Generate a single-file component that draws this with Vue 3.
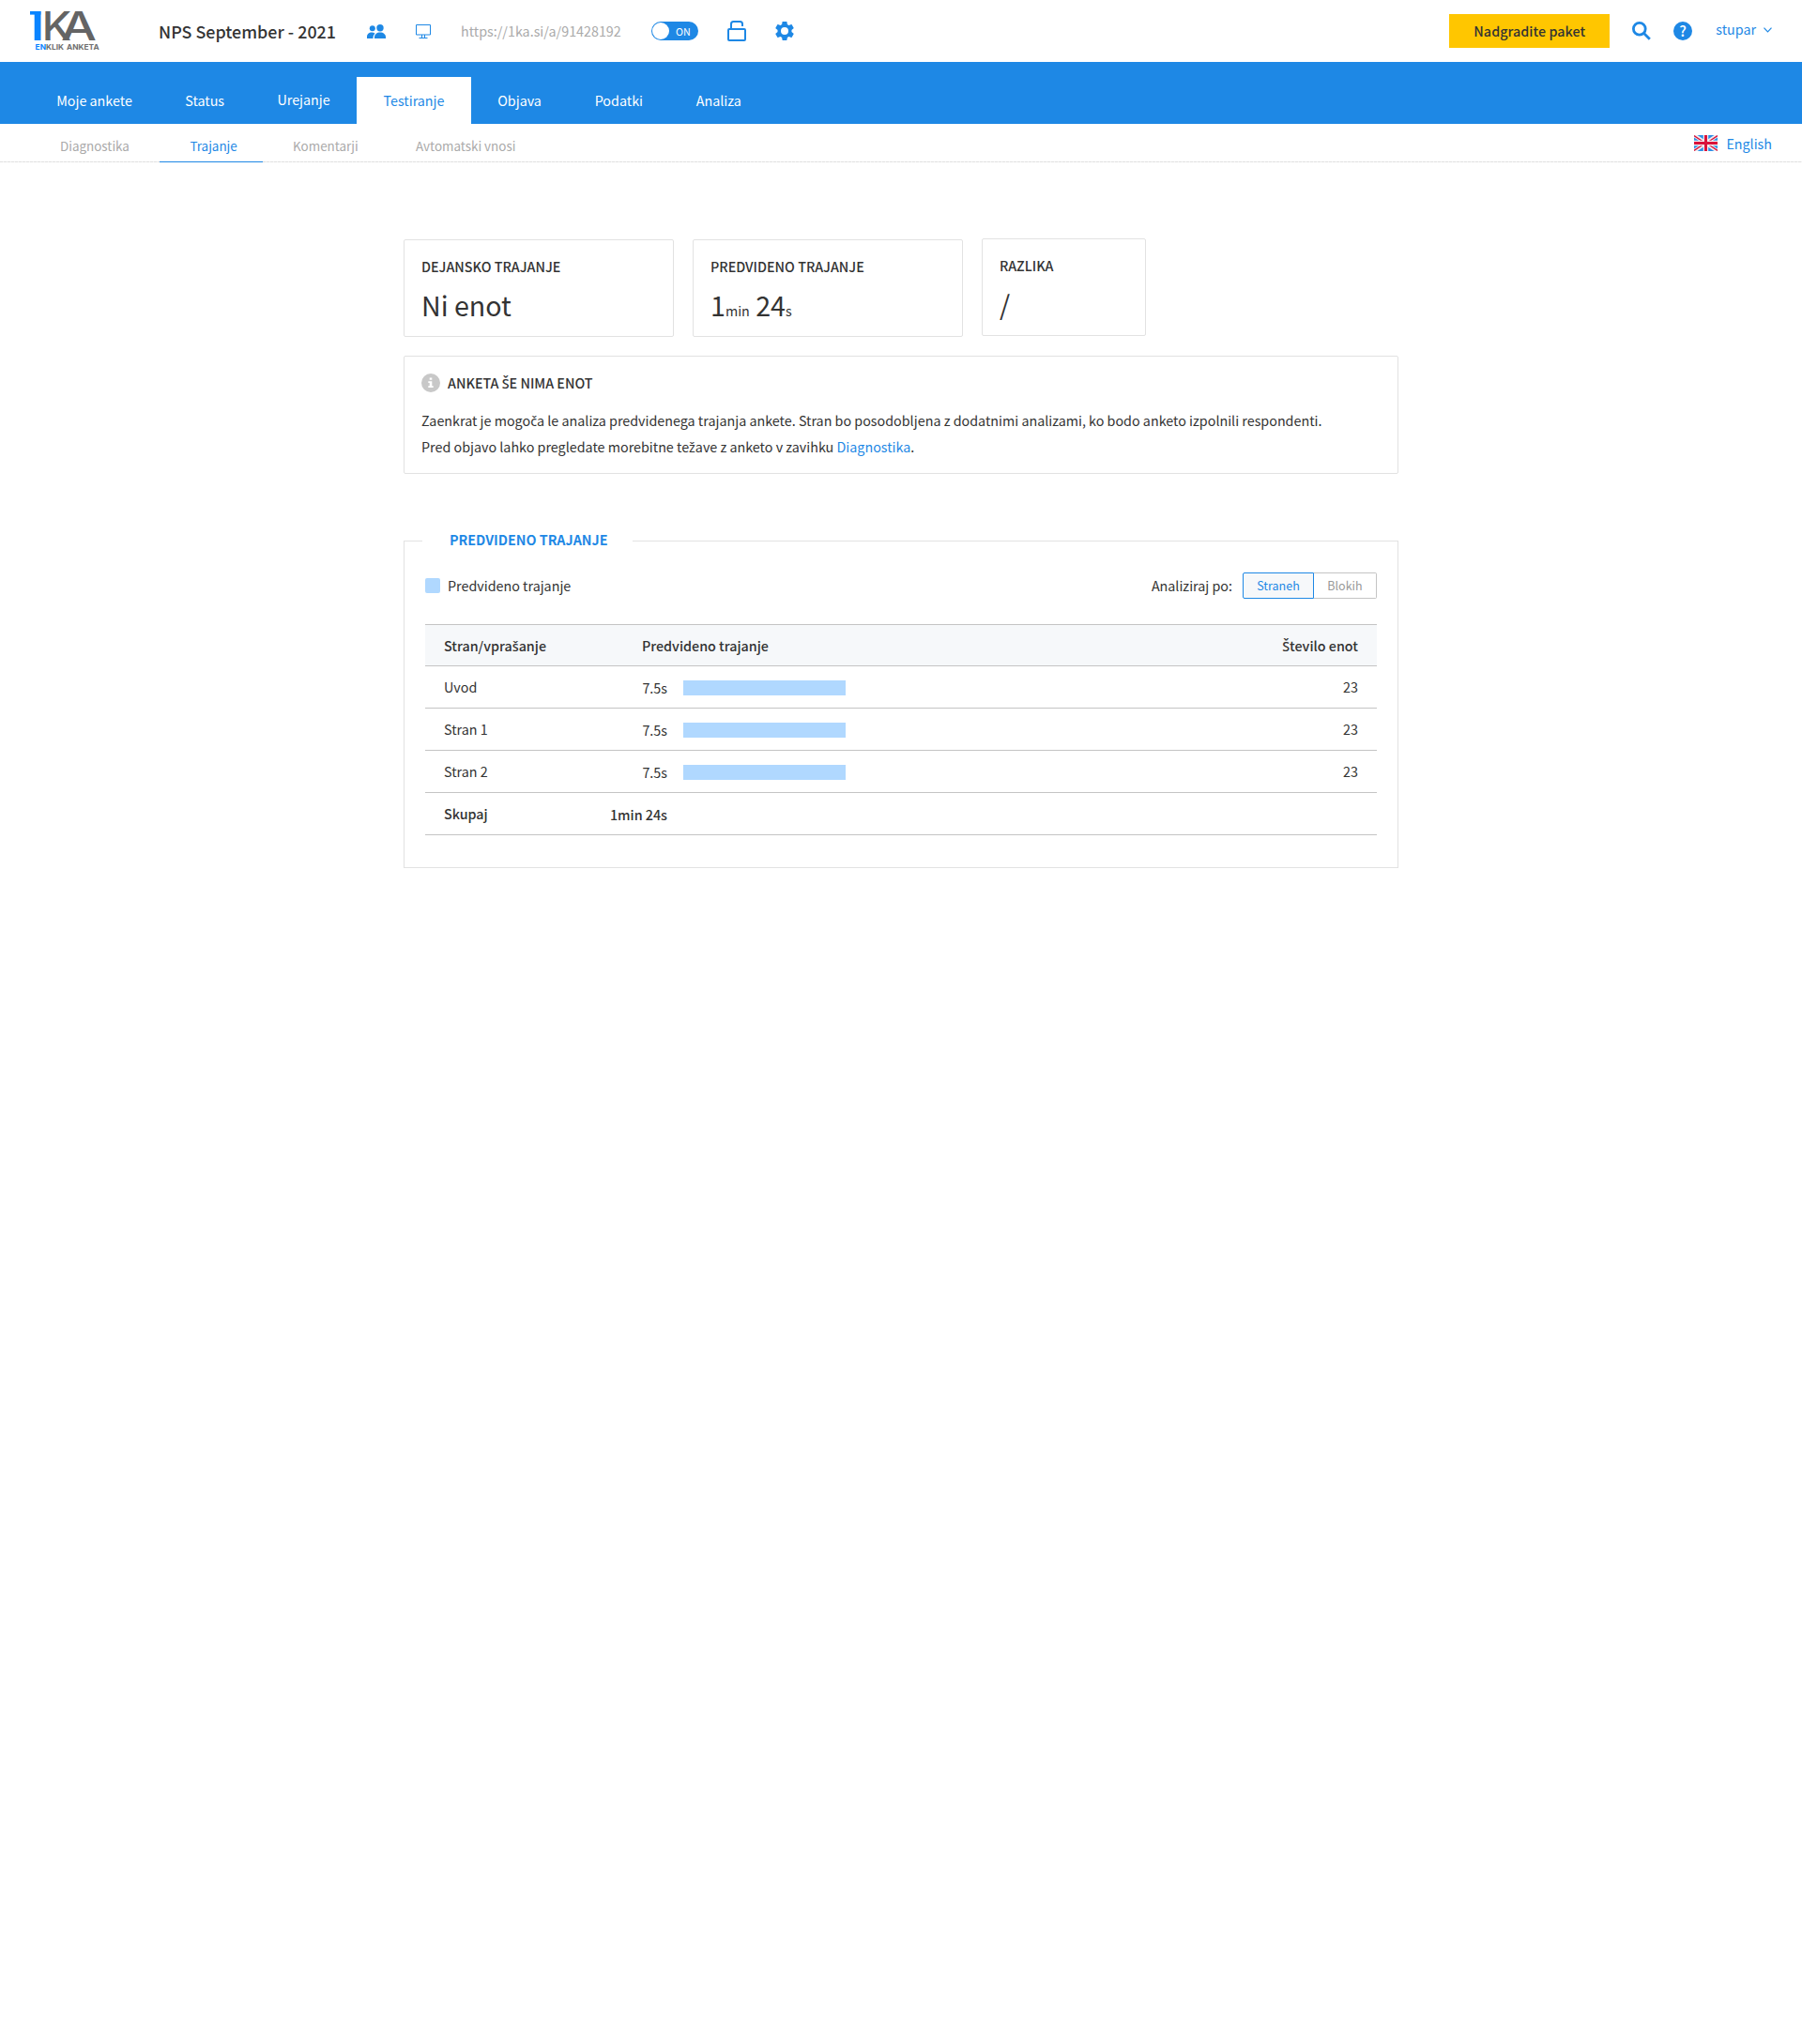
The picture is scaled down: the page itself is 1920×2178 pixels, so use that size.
<script setup>
import { ref } from 'vue'

const tabs = ['Moje ankete', 'Status', 'Urejanje', 'Testiranje', 'Objava', 'Podatki', 'Analiza']
const activeTab = ref('Testiranje')

const subTabs = ['Diagnostika', 'Trajanje', 'Komentarji', 'Avtomatski vnosi']
const activeSubTab = ref('Trajanje')

const groupings = ['Straneh', 'Blokih']
const grouping = ref('Straneh')

const rows = [
  { name: 'Uvod', time: '7.5s', width: 173, units: 23 },
  { name: 'Stran 1', time: '7.5s', width: 173, units: 23 },
  { name: 'Stran 2', time: '7.5s', width: 173, units: 23 },
]
</script>

<template>
  <div class="page">
    <header class="header">
      <svg class="logo" width="74" height="44" viewBox="0 0 74 44">
        <rect x="0" y="1" width="11.5" height="3.6" fill="#0a84ff" />
        <rect x="4.7" y="1" width="6.8" height="31" fill="#0a84ff" />
        <text class="logo-mark" x="12.8" y="32" textLength="31.5" lengthAdjust="spacingAndGlyphs">K</text>
        <text class="logo-mark" x="33" y="32" textLength="38" lengthAdjust="spacingAndGlyphs">A</text>
        <text class="logo-sub" x="5.6" y="42" textLength="68" lengthAdjust="spacingAndGlyphs"><tspan class="logo-en">EN</tspan>KLIK ANKETA</text>
      </svg>
      <h1 class="title">NPS September - 2021</h1>
      <svg class="icon" width="20" height="15" viewBox="0 0 20 15">
        <circle cx="5.8" cy="4.2" r="3" />
        <circle cx="14" cy="3.7" r="3.7" />
        <path d="M0 15v-1.6C0 10.4 2.2 8.6 5 8.6c1.5 0 2.7.4 3.6 1.1C7.2 10.8 6.5 12.3 6.5 15z" />
        <path d="M8 15v-1.2c0-3.2 2.5-5.2 6-5.2s6 2 6 5.2V15z" />
      </svg>
      <svg class="icon-line" width="16" height="15" viewBox="0 0 16 15">
        <path d="M.5.5h15v10.5H.5zM6.5 11v3.5M9.5 11v3.5M3.5 14.5h9" />
      </svg>
      <span class="url">https://1ka.si/a/91428192</span>
      <div class="toggle">
        <span class="knob"></span>
        <span class="toggle-label">ON</span>
      </div>
      <svg class="lock" width="20" height="22" viewBox="0 0 20 22">
        <rect x="1" y="9" width="18" height="12" rx="1" />
        <path d="M4 9V3.5Q4 1 6.5 1h7Q16 1 16 3.5V6" />
      </svg>
      <svg class="icon gear" width="20" height="20" viewBox="2 2 20 20">
        <path d="M19.43 12.98c.04-.32.07-.64.07-.98s-.03-.66-.07-.98l2.11-1.65c.19-.15.24-.42.12-.64l-2-3.46c-.12-.22-.39-.3-.61-.22l-2.49 1c-.52-.4-1.08-.73-1.69-.98l-.38-2.65C14.46 2.18 14.25 2 14 2h-4c-.25 0-.46.18-.49.42l-.38 2.65c-.61.25-1.17.59-1.69.98l-2.49-1c-.23-.09-.49 0-.61.22l-2 3.46c-.13.22-.07.49.12.64l2.11 1.65c-.04.32-.07.65-.07.98s.03.66.07.98l-2.11 1.65c-.19.15-.24.42-.12.64l2 3.46c.12.22.39.3.61.22l2.49-1c.52.4 1.08.73 1.69.98l.38 2.65c.03.24.24.42.49.42h4c.25 0 .46-.18.49-.42l.38-2.65c.61-.25 1.17-.59 1.69-.98l2.49 1c.23.09.49 0 .61-.22l2-3.46c.12-.22.07-.49-.12-.64l-2.11-1.65zM12 16a4 4 0 1 1 0-8 4 4 0 0 1 0 8z" />
      </svg>

      <div class="header-right">
        <button class="upgrade">Nadgradite paket</button>
        <svg class="search" width="20" height="20" viewBox="0 0 20 20">
          <circle cx="7.8" cy="7.8" r="6.4" />
          <path d="M12.3 12.3l6.5 6.5" />
        </svg>
        <svg class="icon" width="20" height="20" viewBox="0 0 20 20">
          <circle cx="10" cy="10" r="10" />
          <text class="help-mark" x="10" y="15.7" text-anchor="middle">?</text>
        </svg>
        <a class="user">
          <span>stupar</span>
          <svg class="caret" width="9" height="6" viewBox="0 0 9 6">
            <path d="M.5.7l4 4.2 4-4.2" />
          </svg>
        </a>
      </div>
    </header>

    <nav class="tabs">
      <a
        v-for="tab in tabs"
        :key="tab"
        class="tab"
        :class="{ active: tab === activeTab }"
        @click="activeTab = tab"
      >{{ tab }}</a>
    </nav>

    <nav class="subtabs">
      <a
        v-for="tab in subTabs"
        :key="tab"
        class="subtab"
        :class="{ active: tab === activeSubTab }"
        @click="activeSubTab = tab"
      >{{ tab }}</a>
      <a class="language">
        <svg width="25" height="17" viewBox="0 0 25 17">
          <rect width="25" height="17" fill="#2f8fe6" />
          <path d="M0 0l25 17M25 0L0 17" stroke="#f1eef0" stroke-width="4" />
          <path d="M0 .6l10 6.6M25 .6l-10 6.6M0 16.4l10-6.6M25 16.4l-10-6.6" stroke="#d9123a" stroke-width="1.3" />
          <path d="M12.5 0v17M0 8.5h25" stroke="#f1eef0" stroke-width="5.4" />
          <path d="M12.5 0v17M0 8.5h25" stroke="#d9123a" stroke-width="3" />
        </svg>
        <span>English</span>
      </a>
    </nav>

    <main class="content">
      <section class="cards">
        <div class="card">
          <h2>DEJANSKO TRAJANJE</h2>
          <p class="value">Ni enot</p>
        </div>
        <div class="card">
          <h2>PREDVIDENO TRAJANJE</h2>
          <p class="value">1<small>min</small> 24<small>s</small></p>
        </div>
        <div class="card card-small">
          <h2>RAZLIKA</h2>
          <p class="value">/</p>
        </div>
      </section>

      <section class="notice">
        <div class="notice-head">
          <svg width="20" height="20" viewBox="0 0 20 20">
            <circle cx="10" cy="10" r="10" fill="#c8c8c8" />
            <path d="M8.7 4.5h2.6v2.3H8.7zM7.3 8.3h4v5h1.4V15H7.3v-1.7h1.4V10H7.3z" fill="#fff" />
          </svg>
          <h2>ANKETA <span class="caron">Š</span>E NIMA ENOT</h2>
        </div>
        <p>
          Zaenkrat je mogo<span class="caron">č</span>a le analiza predvidenega trajanja ankete. Stran bo posodobljena z dodatnimi analizami, ko bodo anketo izpolnili respondenti.<br>
          Pred objavo lahko pregledate morebitne te<span class="caron">ž</span>ave z anketo v zavihku <a>Diagnostika</a>.
        </p>
      </section>

      <fieldset class="panel">
        <legend>PREDVIDENO TRAJANJE</legend>
        <div class="panel-bar">
          <span class="swatch"></span>
          <span class="bar-text">Predvideno trajanje</span>
          <span class="bar-text group-label">Analiziraj po:</span>
          <div class="segments">
            <button
              v-for="g in groupings"
              :key="g"
              class="segment"
              :class="{ active: g === grouping }"
              @click="grouping = g"
            >{{ g }}</button>
          </div>
        </div>

        <div class="table">
          <div class="row row-head">
            <span class="col-question">Stran/vpra<span class="caron">š</span>anje</span>
            <span>Predvideno trajanje</span>
            <span class="col-units"><span class="caron">Š</span>tevilo enot</span>
          </div>
          <div
            v-for="row in rows"
            :key="row.name"
            class="row"
          >
            <span class="col-name">{{ row.name }}</span>
            <span class="col-time">{{ row.time }}</span>
            <span class="bar" :style="{ width: row.width + 'px' }"></span>
            <span class="col-units">{{ row.units }}</span>
          </div>
          <div class="row row-total">
            <span class="col-name">Skupaj</span>
            <span class="col-time">1min 24s</span>
          </div>
        </div>
      </fieldset>
    </main>
  </div>
</template>

<style>
body {
  margin: 0;
  background: #fff;
}
</style>

<style scoped>
.page {
  min-height: 2178px;
  font-family: "Noto Sans CJK SC", "Noto Sans", sans-serif;
  font-size: 14.32px;
  color: #333;
}

.page * {
  box-sizing: border-box;
}

h1,
h2,
p {
  margin: 0;
}

svg {
  display: block;
  flex: none;
  overflow: visible;
}

.language svg {
  overflow: hidden;
}

button {
  font-family: inherit;
  cursor: pointer;
}

/* letters with a caron come from Noto Sans */
.caron {
  font-family: "Noto Sans", sans-serif;
  line-height: 0;
}

.header {
  display: flex;
  align-items: center;
  gap: 32px;
  height: 66px;
  padding: 0 32px;
}

.logo-mark {
  font-family: Inter, sans-serif;
  font-size: 42.6px;
  font-weight: 500;
  fill: #646464;
}

.logo-sub {
  font-family: Inter, sans-serif;
  font-size: 7.8px;
  font-weight: 700;
  word-spacing: 1px;
  fill: #707070;
}

.logo-en {
  fill: #0a84ff;
}

.title {
  width: 190px;
  margin-left: 31px;
  font-size: 17.9px;
  font-weight: 500;
  white-space: nowrap;
}

.icon {
  fill: #1e88e5;
}

.icon-line {
  fill: none;
  stroke: #1e88e5;
}

.url {
  width: 171px;
  margin-top: -2px;
  color: #aaa;
  white-space: nowrap;
}

.toggle {
  display: flex;
  align-items: center;
  width: 50px;
  height: 20px;
  padding: 1px;
  border-radius: 10px;
  background: #1e88e5;
}

.knob {
  width: 18px;
  height: 18px;
  border-radius: 50%;
  background: #fff;
}

.toggle-label {
  margin: 0 0 0 7px;
  font-size: 10.74px;
  color: #fff;
}

.lock {
  margin-left: -1px;
  fill: none;
  stroke: #1e88e5;
  stroke-width: 2;
}

.gear {
  margin-left: -1px;
}

.header-right {
  display: flex;
  align-items: center;
  gap: 24px;
  margin-left: auto;
}

.upgrade {
  width: 171px;
  height: 36px;
  padding: 0 0 2px;
  border: 0;
  background: #ffc600;
  color: #333;
  font-size: 14.32px;
  font-weight: 500;
  letter-spacing: 0.05px;
}

.search {
  fill: none;
  stroke: #1e88e5;
  stroke-width: 2.8;
}

.help-mark {
  font-size: 15.5px;
  font-weight: 500;
  fill: #fff;
}

.user {
  display: flex;
  align-items: center;
  gap: 8px;
  margin: -5px 0 0 1px;
  color: #1e88e5;
}

.caret {
  margin-top: 3px;
  fill: none;
  stroke: #1e88e5;
  stroke-width: 1.2;
}

.tabs {
  display: flex;
  align-items: flex-end;
  height: 66px;
  padding-left: 31px;
  background: #1e88e5;
}

.tab {
  height: 50px;
  padding: 0 28.4px;
  line-height: 50px;
  color: #fff;
  cursor: pointer;
}

.tab:nth-child(1) {
  padding: 0 27.6px 0 29.2px;
}

.tab:nth-child(2) {
  padding: 0 28px 0 28.8px;
}

.tab:nth-child(3) {
  line-height: 48px;
}

.tab.active {
  background: #fff;
  color: #1e88e5;
}

.subtabs {
  display: flex;
  height: 41px;
  padding: 0 32px 0 64px;
  background: repeating-linear-gradient(90deg, #e0e0e0 0 3px, #f2f2f2 3px 4px) 0 100% / 100% 1px no-repeat;
}

.subtab {
  height: 41px;
  padding: 0 32px;
  font-size: 13.43px;
  line-height: 47px;
  color: #aaa;
  cursor: pointer;
}

.subtab:nth-child(1) {
  width: 106px;
  padding: 0;
}

.subtab:nth-child(2) {
  width: 110px;
  padding: 0 0 0 32.4px;
}

.subtab:nth-child(3) {
  width: 131px;
  padding: 0 0 0 32px;
}

.subtab.active {
  border-bottom: 1px solid #1e88e5;
  color: #1e88e5;
}

.language {
  display: flex;
  align-items: center;
  gap: 9px;
  height: 40px;
  margin-left: auto;
  color: #1e88e5;
}

.content {
  width: 1060px;
  margin: 82px auto 0;
}

.cards {
  display: flex;
  gap: 20px;
}

.card {
  width: 288px;
  height: 104px;
  padding: 17px 18px;
  border: 1px solid #e2e2e2;
  border-radius: 2px;
}

.card-small {
  width: 175px;
  margin-top: -1px;
}

h2 {
  font-size: 14.32px;
  font-weight: 500;
  line-height: 21px;
}

.value {
  margin-top: 11px;
  font-size: 28.64px;
  line-height: 40px;
}

.value small {
  font-size: 14.32px;
}

.notice {
  height: 126px;
  margin-top: 20px;
  padding: 18px;
  border: 1px solid #e2e2e2;
  border-radius: 2px;
}

.notice-head {
  display: flex;
  align-items: center;
  gap: 8px;
  height: 20px;
}

.notice-head h2 {
  padding-bottom: 2px;
}

.notice p {
  margin-top: 16px;
  line-height: 28px;
  white-space: nowrap;
}

.notice a {
  color: #1e88e5;
}

.panel {
  min-width: 0;
  height: 359px;
  margin: 61px 0 0;
  padding: 0 22px;
  border: 1px solid #e2e2e2;
}

.panel legend {
  height: 20px;
  margin-left: -3px;
  padding: 0 27px 0 29px;
  font-weight: 700;
  line-height: 18px;
  color: #1e88e5;
}

.panel-bar {
  display: flex;
  align-items: center;
  height: 28px;
  margin-top: 24px;
}

.swatch {
  width: 16px;
  height: 16px;
  margin-right: 8px;
  border-radius: 2px;
  background: #b0d8ff;
}

.bar-text {
  padding-bottom: 1px;
}

.group-label {
  margin-left: auto;
  margin-right: 11px;
}

.segments {
  display: flex;
}

.segment {
  height: 28px;
  width: 67px;
  padding: 0;
  border: 1px solid #c4c4c4;
  border-left: 0;
  border-radius: 0 2px 2px 0;
  background: #fff;
  color: #999;
  font-size: 12.53px;
  line-height: 26px;
}

.segment.active {
  width: 76px;
  border: 1px solid #1e88e5;
  border-radius: 2px 0 0 2px;
  background: #f6f8fa;
  color: #1e88e5;
}

.table {
  margin-top: 27px;
  border-top: 1px solid #c4c4c4;
}

.row {
  display: flex;
  align-items: center;
  height: 45px;
  padding: 0 20px;
  border-bottom: 1px solid #c4c4c4;
}

.row-head {
  height: 44px;
  background: #f6f8fa;
  font-weight: 500;
}

.row-total {
  font-weight: 500;
}

.col-question {
  width: 211px;
}

.col-name {
  width: 120px;
  padding-bottom: 1px;
}

.col-time {
  width: 118px;
  padding-top: 1px;
  text-align: right;
}

.bar {
  height: 16px;
  margin: 2px 0 0 17px;
  background: #b0d8ff;
}

.col-units {
  margin-left: auto;
}

.row:not(.row-head) .col-units {
  padding-bottom: 1px;
}
</style>
